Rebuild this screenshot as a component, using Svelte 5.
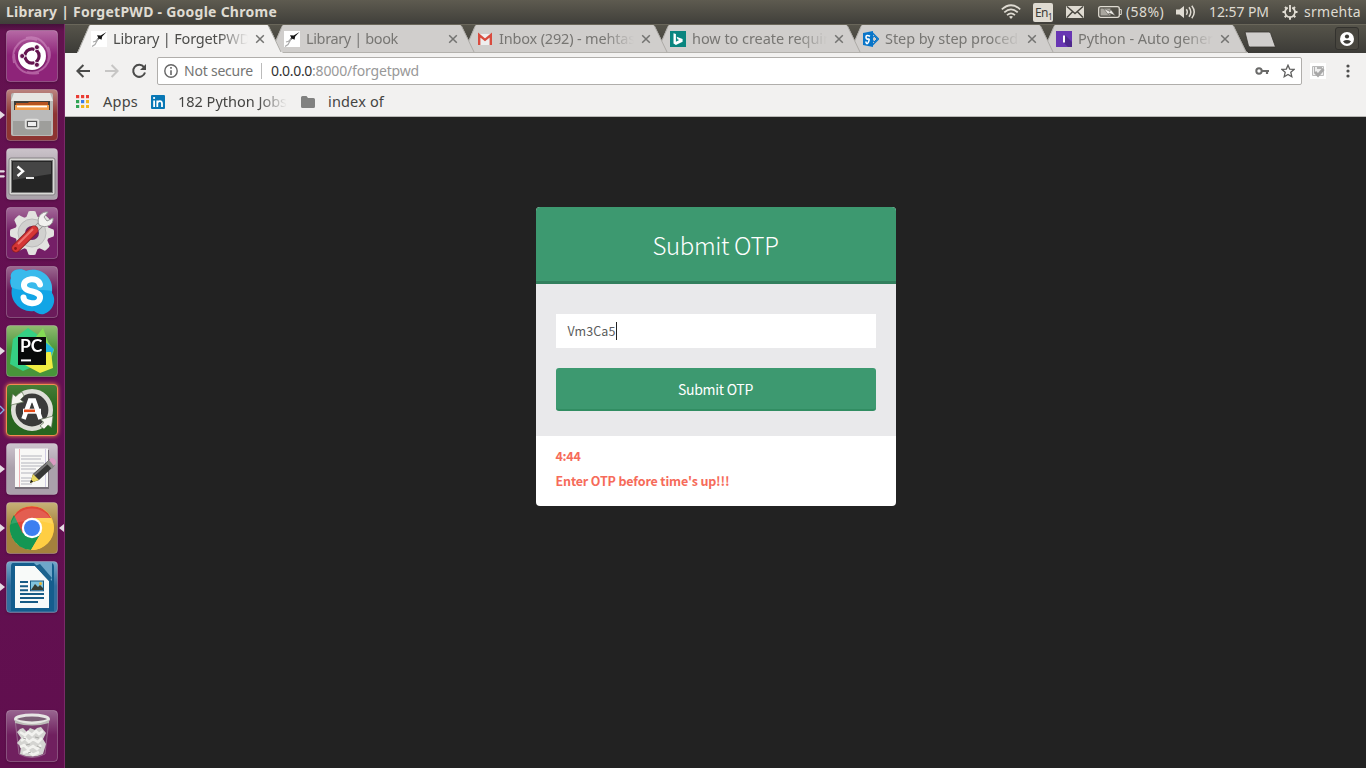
<script>
  const tabs = [
    { icon: 'bird', title: 'Library | ForgetPWD', width: 137, active: true },
    { icon: 'bird', title: 'Library | book', width: 92 },
    { icon: 'gmail', title: 'Inbox (292) - mehtas', width: 136 },
    { icon: 'bing', title: 'how to create requir', width: 137 },
    { icon: 'share', title: 'Step by step procedu', width: 142 },
    { icon: 'python', title: 'Python - Auto genera', width: 143 }
  ];

  const apps = [
    { name: 'dash', top: '#b66aa5', base: '#8e2479' },
    { name: 'files', top: '#bb8580', base: '#8d3432', mark: 'run' },
    { name: 'terminal', top: '#ccc4cb', base: '#aaa3aa', mark: 'two' },
    { name: 'settings', top: '#a36a99', base: '#751f67' },
    { name: 'skype', top: '#9c6a91', base: '#6b1b5b' },
    { name: 'pycharm', top: '#91bb70', base: '#48943a', mark: 'run' },
    { name: 'updater', top: '#477d37', base: '#28651f', mark: 'outline', glow: true },
    { name: 'editor', top: '#cec4ce', base: '#aaa0ab', mark: 'run' },
    { name: 'chrome', top: '#c7b278', base: '#a4813d', mark: 'run', focused: true },
    { name: 'writer', top: '#75a8ca', base: '#316d9d', mark: 'run' },
    { name: 'trash', top: '#986590', base: '#70205f' }
  ];

  let otp = 'Vm3Ca5';

  // Spreads a label's letters so that it fills the given width.
  function fit(node, width) {
    const natural = node.getBoundingClientRect().width;
    node.style.letterSpacing = (width - natural) / node.textContent.length + 'px';
  }
</script>

<div class="desktop">
  <header class="panel">
    <b class="title"><span use:fit={271}>Library | ForgetPWD - Google Chrome</span></b>
    <div class="indicators">
      <svg class="wifi" width="20" height="16" viewBox="0 0 20 16" fill="none" stroke="#dfdbd2" stroke-width="1.7">
        <path d="M.8 5.3Q10-2.8 19.2 5.3M3.3 8.4Q10 2.4 16.7 8.4M6 11.2Q10 7.6 14 11.2" />
        <path d="M8 12.8Q10 11.2 12 12.8L10 15Z" fill="#dfdbd2" stroke="none" />
      </svg>
      <span class="lang">En<sub>1</sub></span>
      <svg class="mail" width="18" height="14" viewBox="0 0 18 14">
        <rect y="1" width="18" height="12" rx="1" fill="#dfdbd2" />
        <path d="M1 1.5L9 8.5L17 1.5M1 12.5L6.3 7M17 12.5L11.7 7" fill="none" stroke="#48463f" stroke-width="1.4" />
      </svg>
      <svg class="battery" width="24" height="14" viewBox="0 0 24 14">
        <rect x=".7" y="1.7" width="20.6" height="10.6" rx="2" fill="none" stroke="#dfdbd2" stroke-width="1.3" />
        <path d="M21.5 4.5h1.8v5h-1.8" fill="none" stroke="#dfdbd2" />
        <rect x="2.5" y="3.5" width="10" height="7" fill="#aaa79f" />
        <path d="M5.5 3.3L12 6.5L12.5 4L17.5 10.8L11 8L10.5 10Z" fill="#eceae5" stroke="#55534b" stroke-width=".6" />
      </svg>
      <span class="percent"><span use:fit={38}>(58%)</span></span>
      <svg class="volume" width="20" height="16" viewBox="0 0 20 16">
        <path d="M0 5.5h3.5L8 2v12l-4.5-3.5H0z" fill="#dfdbd2" />
        <path d="M10.3 5.2q2 2.8 0 5.6M13 3.3q3.6 4.7 0 9.4M15.8 1.7q4.9 6.3 0 12.6" fill="none" stroke="#dfdbd2" stroke-width="1.5" />
      </svg>
      <span class="clock"><span use:fit={60}>12:57 PM</span></span>
      <svg class="gear" width="16" height="16" viewBox="0 0 16 16" fill="none" stroke="#dfdbd2">
        <path d="M5.7 3.6A5 5 0 1 0 10.3 3.6" stroke-width="1.8" />
        <path d="M8 1v7" stroke-width="1.9" />
        <path d="M3 3l2 2M13 3l-2 2M.5 8h3M12.5 8h3M2.7 13.3l2-2M13.3 13.3l-2-2M8 12.8v3" stroke-width="2" />
      </svg>
      <span class="user"><span use:fit={57}>srmehta</span></span>
    </div>
  </header>

  <div class="workspace">
    <nav class="launcher">
      {#each apps as app}
        <div class="slot {app.name}">
          <svg class="tile" class:glow={app.glow} width="52" height="52" viewBox="0 0 52 52">
            <defs>
              <linearGradient id="g-{app.name}" x1="0" y1="0" x2="0" y2="1">
                <stop offset="0" stop-color={app.top} />
                <stop offset=".48" stop-color={app.base} />
                <stop offset="1" stop-color={app.base} />
              </linearGradient>
            </defs>
            <rect x=".5" y=".5" width="51" height="51" rx="3.5" fill="url(#g-{app.name})" stroke={app.glow ? '#f48a51' : '#fff'} stroke-opacity={app.glow ? 1 : 0.25} />
            {#if app.name === 'dash'}
              <path d="M8 33C4 18 16 5 31 10M20 8C34 4 46 18 42 32M42 17C49 31 35 46 21 42M33 43C17 46 8 37 8 24" fill="none" stroke="#d79aca" stroke-opacity=".5" stroke-width="2" />
              <circle cx="26" cy="26.8" r="14.5" fill="#52124a" opacity=".35" />
              <circle cx="26" cy="26" r="14" fill="#fff" />
              <circle cx="26" cy="26" r="7.1" fill="none" stroke="#64144f" stroke-width="3.2" />
              <path d="M16 26h5M30 18l-2 4M30 34l-2-4" stroke="#fff" stroke-width="1.2" />
              <g fill="#64144f" stroke="#fff" stroke-width=".8">
                <circle cx="16.2" cy="26" r="2.5" /><circle cx="30.9" cy="17.2" r="2.5" /><circle cx="30.9" cy="34.8" r="2.5" />
              </g>
            {:else if app.name === 'files'}
              <rect x="5" y="4" width="42" height="43" rx="2" fill="#b9b9b6" />
              <path d="M8 4h36l3 8H5z" fill="#e6e6e3" />
              <rect x="8" y="12" width="36" height="12" fill="#403e39" />
              <path d="M10 14h12l1-1h19v10H10z" fill="#b75420" />
              <path d="M9 16h34v6H9z" fill="#f3a150" />
              <path d="M11 17.5h30" stroke="#fff" stroke-width="1.7" />
              <rect x="7" y="21" width="38" height="25" rx="1" fill="#9e9e9b" />
              <rect x="7" y="21" width="38" height="11" fill="#bababa" />
              <rect x="19.5" y="30.5" width="13" height="9" rx="2" fill="#bcbcb9" stroke="#e0e0de" stroke-width="1.5" />
              <rect x="21.5" y="32.5" width="9" height="5" fill="#eee" stroke="#555" />
            {:else if app.name === 'terminal'}
              <rect x="3" y="10" width="46" height="37" rx="2" fill="#d8d8d5" stroke="#858184" />
              <rect x="5.5" y="12.5" width="41" height="32" fill="#252525" stroke="#777" />
              <path d="M7 14h38v12L7 32z" fill="#454545" />
              <path d="M11.5 18.5L17 23.2L11.5 28" fill="none" stroke="#fff" stroke-width="2.4" />
              <path d="M20 30h8" stroke="#fff" stroke-width="1.8" />
            {:else if app.name === 'settings'}
              <g transform="translate(26 26)">
                <g fill="#e2e2df">
                  {#each [0, 45, 90, 135] as angle}
                    <path d="M-4-20Q-4-22-2-22H2Q4-22 4-20L6-15V15L4 20Q4 22 2 22H-2Q-4 22-4 20L-6 15V-15Z" transform="rotate({angle})" />
                  {/each}
                  <circle r="17" />
                </g>
                <circle r="14" fill="#d1d1cf" stroke="#bbb" /><circle r="7" fill="#742065" />
              </g>
              <path d="M27 25L37 15" stroke="#8a8a88" stroke-width="6.4" />
              <path d="M26 26L37 15" stroke="#d6d6d4" stroke-width="5" />
              <path d="M33 18C30 11 35 4 42 5L38 10L41 14L47 11C48 18 40 22 33 18Z" fill="#f2f2f0" stroke="#999" />
              <path d="M10 41L28 23" stroke="#8d2024" stroke-width="9" stroke-linecap="round" />
              <path d="M10 41L28 23" stroke="#d53534" stroke-width="7.4" stroke-linecap="round" />
              <path d="M12 37L27 22" stroke="#ef7570" stroke-width="2" />
              <circle cx="9.5" cy="41.5" r="1.4" fill="#8b1517" />
            {:else if app.name === 'skype'}
              <path d="M5 12C3 4 14 1 20 5C35 0 48 12 46 27C51 34 47 45 38 48C34 49 31 47 28 45C15 47 3 35 6 22C4 18 3 15 5 12Z" fill="#12a5e6" />
              <path d="M5 12C3 4 14 1 20 5C35 0 48 12 46 25C32 22 14 27 5 21Z" fill="#4fc5ef" opacity=".65" />
              <path d="M34 18.5C32 10.5 17 12 18 20C19 27 35 24 34 32C33 40 18 38 17.5 31.5" fill="none" stroke="#fff" stroke-width="6" stroke-linecap="round" />
            {:else if app.name === 'pycharm'}
              <path d="M4 39L7 14L22 3L35 12L42 35L17 46Z" fill="#35d184" />
              <path d="M29 13L37 3L42 17L48 25L42 44Z" fill="#84dc55" />
              <path d="M38 16L48 24L42 39Z" fill="#25b5dc" />
              <path d="M41 27L45 27L47 43L34 48L19 40Z" fill="#f0ed42" />
              <rect x="12" y="12" width="28" height="28" fill="#080a0a" />
              <text x="14" y="27.2" textLength="22.5" lengthAdjust="spacingAndGlyphs">PC</text>
              <path d="M15 35.4h10" stroke="#fff" stroke-width="2" />
            {:else if app.name === 'updater'}
              <circle cx="26" cy="26" r="19" fill="#3b3b3a" />
              <circle cx="26" cy="26" r="18.7" fill="none" stroke="#deded8" stroke-width="4.6" />
              <path d="M5 21L6.5 10L10 12.5Q12 9.5 16 8L18 12L14.5 15.5L17.5 18Z M34.5 35.5L47 32L45.5 43.5L42 41L38 45L34 42L38 38.5Z" fill="#f5f5ef" stroke="#5d7452" stroke-width=".7" />
              <path d="M17.5 35L24 16.5H28L34.5 35" fill="none" stroke="#fff" stroke-width="4.6" />
              <path d="M17 27.2h18" stroke="#fff" stroke-width="5" />
              <path d="M18 26.8h11" stroke="#e64b19" stroke-width="2.6" />
            {:else if app.name === 'editor'}
              <path d="M9 7H43V46H9z" fill="#777079" />
              <path d="M9 5.5H42V44H9z" fill="#f8f8f6" />
              <path d="M15 13h21M15 16h20M15 20h23M15 23h21M15 26h15M15 30h17M15 35h10M15 38h14M15 41h11" stroke="#b3b4bc" stroke-width="1" />
              <path d="M13.5 6v38" stroke="#efb1b4" /><path d="M39.5 6v38" stroke="#d1cde4" />
              <path d="M24 40L27 31L44 16L49 22L33 37Z" fill="#363735" />
              <path d="M28 32L45 17" stroke="#777" stroke-width="2" />
              <path d="M40 20L43 17L49 22L46 26Z" fill="#8a8a87" />
              <path d="M43 17L45 15Q50 15 50 20L48 23Z" fill="#d99bc2" />
              <path d="M24 40L27 31L33 37Z" fill="#e8d65e" /><path d="M24 40l1.1-3.2 2.1 2z" fill="#151515" />
            {:else if app.name === 'chrome'}
              <circle cx="26" cy="26" r="22" fill="#ffce43" />
              <path d="M26 26L16.2 31.5L6.7 15.4A22 22 0 0 1 45.2 16H26Z" fill="#df4738" />
              <path d="M8 13A22 22 0 0 0 25 48L35 31L26 26L16.5 31Z" fill="#149653" />
              <path d="M26 16H45.2A22 22 0 0 1 25 48L35 31Z" fill="#ffce43" />
              <circle cx="26" cy="26" r="10.2" fill="#fff" /><circle cx="26" cy="26" r="8" fill="#3c7ff0" />
              <path d="M5 22A22 22 0 0 1 47 22Q26 15 5 22" fill="#fff" opacity=".13" />
            {:else if app.name === 'writer'}
              <path d="M7 2h38q3 0 3 4v44H5V6q0-4 2-4z" fill="#145d8d" />
              <path d="M28 2H46V20Z" fill="#6fa7ca" />
              <path d="M9 5H29L43 20V47H9Z" fill="#f8faf9" />
              <path d="M29 5L43 20L46 17L34 3Z" fill="#1d638e" />
              <path d="M14 21h8M14 25.2h8M14 29.3h8M14 33h24M14 37h24M14 41h18" stroke="#175b85" stroke-width="2" />
              <rect x="24.5" y="20" width="13" height="9.8" fill="#80c4df" stroke="#175b85" />
              <path d="M25 29L29 23L32 26L34 24L37 27V29Z" fill="#363e35" /><circle cx="34.5" cy="22.5" r="1.5" fill="#eab736" />
            {:else}
              <path d="M9 9L13 44Q26 51 39 44L43 9" fill="#75456d" fill-opacity=".45" stroke="#ad8ba7" stroke-opacity=".6" />
              <path d="M11 22L14 19L17 18L21 22L24 18L29 20L31 18L35 17L40 23L37 29L40 34L37 44Q26 49 14 44L15 37L11 33L15 28Z" fill="#d4d4d1" />
              <path d="M14 22L19 25L22 22L26 25L30 21L33 24L37 21M15 31L19 28L23 32L27 29L32 32L36 28M14 37L18 35L22 39L27 36L31 39L35 35M17 43L22 41L27 45L33 42" fill="none" stroke="#f2f2ef" stroke-width="2.6" />
              <path d="M17 28L20 29M29 27L33 28M20 35L24 34M31 36L35 38M22 43L25 42" stroke="#a8a8a5" stroke-width="1" />
              <ellipse cx="26" cy="9" rx="16.5" ry="4" fill="#7c6176" stroke="#e7e7e4" stroke-width="3" />
              <path d="M9 10Q26 18 43 10V13Q26 18 9 13Z" fill="#bcbcb8" />
            {/if}
          </svg>
          {#if app.mark}
            <svg class="mark" width="6" height="10" viewBox="0 0 6 10">
              {#if app.mark === 'two'}
                <path d="M0 1.2h4l1 1-1 1.2H0zM0 6.2h4l1 1-1 1.2H0z" fill="#e5dce3" />
              {:else if app.mark === 'outline'}
                <path d="M0 1L4 5L0 9" fill="none" stroke="#83aee4" stroke-width="1.3" />
              {:else}
                <path d="M0 1L5 5L0 9Z" fill="#e5dce3" />
              {/if}
            </svg>
          {/if}
          {#if app.focused}
            <svg class="focus" width="6" height="10" viewBox="0 0 6 10"><path d="M6 1L1 5L6 9Z" fill="#e5dce3" /></svg>
          {/if}
        </div>
      {/each}
    </nav>

    <main class="browser">
      <div class="tabstrip">
        {#each tabs as tab, i}
          <div class="tab" class:active={tab.active} style:z-index={10 - i}>
            <svg class="shape" width="206" height="29" viewBox="0 0 206 29">
              <path d="M0 29L1 27L12 2Q12.5 1 13.5 1H190Q191 1 191.6 2L204 27L206 29Z" fill={tab.active ? '#f2f1f0' : '#d0cecc'} />
              <path d="M1 28L12 2.5M191.5 2L204 28" fill="none" stroke={tab.active ? '#aaa9a4' : '#adaba7'} />
              {#if !tab.active}<path d="M0 28.5H206" stroke="#b3b1ad" />{/if}
            </svg>
            <svg class="favicon" width="16" height="16" viewBox="0 0 16 16">
              {#if tab.icon === 'bird'}
                <path d="M0 0h16v16H0z" fill="#fff" />
                <path d="M15.5 1L11.2 5.4L10.5 8.8L8.6 7.7L4.6 10.5L7.2 6.5L6 4.2L9.7 4.6Z" fill="#161616" />
                <path d="M7.6 7.8L4.5 10.2L2 11M6.5 9L4 13.5L1 15.5" fill="none" stroke="#aaa" stroke-width="1.2" />
              {:else if tab.icon === 'gmail'}
                <path d="M1 3h14v11H1z" fill="#eee" /><path d="M2.2 14V4L8 8.8L13.8 4V14" fill="none" stroke="#d94b3e" stroke-width="2.4" />
              {:else if tab.icon === 'bing'}
                <path d="M0 0h16v16H0z" fill="#0a857f" /><path d="M3.5 2.2l2.4 .9v7.6L9.2 9 7.5 8.2 6.6 5.8l6 2.3v2.6L5.9 14 3.5 12.5z" fill="#fff" />
              {:else if tab.icon === 'share'}
                <path d="M9.5 2L15.5 8L9.5 14" fill="none" stroke="#0875c9" stroke-width="1.5" />
                <path d="M11 5L14 8L11 11L9 8z" fill="none" stroke="#0875c9" />
                <path d="M0 2L10 0V16L0 14z" fill="#0875c9" /><path d="M7 5.2Q3 3.5 3 6T5 8T5.5 11T2.7 10.5" fill="none" stroke="#fff" stroke-width="1.6" />
              {:else}
                <path d="M0 0h16v16H0z" fill="#6836b3" /><path d="M9 4L16 11V16H12L7 11z" fill="#4f298d" /><path d="M8 4.5v7" stroke="#fff" stroke-width="2" />
              {/if}
            </svg>
            <span class="label"><span use:fit={tab.width}>{tab.title}</span></span>
            <svg class="close" width="10" height="10" viewBox="0 0 10 10"><path d="M1.2 1.2l7.6 7.6M8.8 1.2L1.2 8.8" stroke="#737371" stroke-width="1.5" /></svg>
          </div>
        {/each}
        <svg class="newtab" width="34" height="17" viewBox="0 0 34 17"><path d="M2 1H25.5Q27 1 27.6 2.2L32.5 16H7.5Q6 16 5.5 15Z" fill="#d0cecc" stroke="#36342f" stroke-width=".8" /></svg>
        <div class="person">
          <svg width="14" height="14" viewBox="0 0 14 14"><circle cx="7" cy="7" r="7" fill="#fff" /><circle cx="7" cy="4.5" r="2.1" fill="#3c3b37" /><path d="M3 9.2Q7 6.6 11 9.2Q9.5 11.7 7 11.7T3 9.2z" fill="#3c3b37" /></svg>
        </div>
      </div>

      <div class="toolbar">
        <svg class="back" width="15" height="14" viewBox="0 0 15 14" fill="none" stroke="#4b4b4a" stroke-width="2"><path d="M7.4 1L1.4 7L7.4 13M1.7 7H14" /></svg>
        <svg class="forward" width="15" height="14" viewBox="0 0 15 14" fill="none" stroke="#c7c6c5" stroke-width="2"><path d="M7.6 1L13.6 7L7.6 13M13.3 7H1" /></svg>
        <svg class="reload" width="16" height="16" viewBox="0 0 16 16"><path d="M13 4.2A6 6 0 1 0 14 9.5" fill="none" stroke="#4b4b4a" stroke-width="2" /><path d="M15 1V7H9z" fill="#4b4b4a" /></svg>
        <div class="address">
          <svg class="info" width="14" height="14" viewBox="0 0 14 14"><circle cx="7" cy="7" r="6.2" fill="none" stroke="#666" stroke-width="1.4" /><path d="M7 3v1.7M7 6.2V11" stroke="#666" stroke-width="1.6" /></svg>
          <span class="insecure"><span use:fit={69}>Not secure</span></span>
          <span class="url"><span use:fit={41}>0.0.0.0</span><span class="path" use:fit={107}>:8000/forgetpwd</span></span>
          <svg class="key" width="15" height="8" viewBox="0 0 15 8"><circle cx="4" cy="4" r="2.7" fill="none" stroke="#6a6a69" stroke-width="2" /><path d="M7 4h7M12 4v3" stroke="#6a6a69" stroke-width="2.2" /></svg>
          <svg class="star" width="14" height="14" viewBox="0 0 14 14"><path d="M7 1.2L8.7 5.1L13.1 5.4L9.8 8.3L10.8 12.7L7 10.4L3.2 12.7L4.2 8.3L.9 5.4L5.3 5.1Z" fill="none" stroke="#5e5e5d" stroke-width="1.3" /></svg>
        </div>
        <svg class="extension" width="16" height="16" viewBox="0 0 16 16"><path d="M0 0h16v16H0z" fill="#fff" /><path d="M2.5 3.5h11v9h-11z" fill="#eee" stroke="#bbb" /><path d="M4 5h1M7 5h5M4 7h1M4 9h1" stroke="#777" /><path d="M5 9L8 12.2L13.5 6" fill="none" stroke="#a7a7a7" stroke-width="3" /></svg>
        <svg class="more" width="4" height="14" viewBox="0 0 4 14" fill="#4e4e4d"><circle cx="2" cy="2" r="1.6" /><circle cx="2" cy="7" r="1.6" /><circle cx="2" cy="12" r="1.6" /></svg>
      </div>

      <div class="bookmarks">
        <svg class="grid" width="13" height="13" viewBox="0 0 13 13">
          {#each ['#ea3c34', '#ea3c34', '#ea3c34', '#31a354', '#397ce8', '#f1b51c', '#31a354', '#f1b51c', '#f1b51c'] as color, i}
            <rect x={(i % 3) * 5} y={Math.floor(i / 3) * 5} width="3.2" height="3.2" fill={color} />
          {/each}
        </svg>
        <span class="bm-apps"><span use:fit={35}>Apps</span></span>
        <svg class="linkedin" width="14" height="14" viewBox="0 0 14 14"><rect width="14" height="14" rx="1" fill="#0877b5" /><path d="M3.1 5.5V12M6.3 12V5.5M6.4 8Q7 6.2 8.9 6.2T11 8.3V12" fill="none" stroke="#fff" stroke-width="1.8" /><circle cx="3.1" cy="3" r="1.1" fill="#fff" /></svg>
        <span class="bm-jobs"><span use:fit={109}>182 Python Jobs</span></span>
        <svg class="folder" width="14" height="12" viewBox="0 0 14 12"><path d="M0 1.5Q0 0 1.5 0H5.5L7 2H12.5Q14 2 14 3.5V10.5Q14 12 12.5 12H1.5Q0 12 0 10.5Z" fill="#818180" /></svg>
        <span class="bm-index"><span use:fit={56}>index of</span></span>
      </div>

      <div class="page">
        <section class="card">
          <h1><span use:fit={126}>Submit OTP</span></h1>
          <form onsubmit={(e) => e.preventDefault()}>
            <div class="field"><span use:fit={48}>{otp}</span><i class="caret"></i></div>
            <button><span use:fit={75}>Submit OTP</span></button>
          </form>
          <footer>
            <p><span use:fit={25}>4:44</span></p>
            <p><span use:fit={174}>Enter OTP before time's up!!!</span></p>
          </footer>
        </section>
      </div>
    </main>
  </div>
</div>

<style>
  :global(body) { background: #222; overflow: hidden; }
  .desktop { width: 1366px; height: 768px; display: flex; flex-direction: column; font: 14.5px "Noto Sans", sans-serif; overflow: hidden; }
  svg { display: block; flex: none; }
  span { white-space: nowrap; }
  .panel { height: 24px; flex: none; display: flex; align-items: center; justify-content: space-between; color: #dfdbd2; background: linear-gradient(#5e5b50, #403f3a); }
  .title { padding-left: 6px; font-size: 14px; line-height: 24px; font-weight: 700; }
  .indicators { display: flex; align-items: center; width: 366px; height: 24px; font-size: 14px; line-height: 24px; }
  .wifi { margin-left: 1px; }
  .lang { margin-left: 12px; width: 20px; height: 19px; box-sizing: border-box; padding-left: 2px; background: #dfdbd2; color: #3e3d38; border-radius: 2px; font-size: 12px; line-height: 19px; letter-spacing: -.6px; }
  .lang sub { font-size: 8px; line-height: 0; }
  .mail { margin-left: 13px; }
  .battery { margin-left: 14px; }
  .percent { margin-left: 4px; width: 38px; }
  .volume { margin-left: 12px; }
  .clock { margin-left: 13px; width: 60px; }
  .gear { margin-left: 13px; }
  .user { margin-left: 6px; }

  .workspace { flex: 1; display: flex; min-height: 0; }
  .launcher { width: 65px; box-sizing: border-box; flex: none; display: flex; flex-direction: column; gap: 7px; padding: 6px 0 6px 6px; border-right: 1px solid #7a2b68; background: linear-gradient(#46103b, #63124f 7px, #651053 50%, #600f4e); }
  .slot { position: relative; height: 52px; }
  .trash { margin-top: auto; }
  .tile { filter: drop-shadow(0 1px 1px #35072b88); }
  .tile.glow { filter: drop-shadow(0 0 2px #ff884c); }
  .tile text { font: 700 16.5px Lato, sans-serif; fill: #fff; }
  .mark { position: absolute; left: -6px; top: 21px; }
  .focus { position: absolute; right: 0; top: 21px; }

  .browser { flex: 1; min-width: 0; display: flex; flex-direction: column; }
  .tabstrip { height: 29px; flex: none; display: flex; align-items: center; padding-left: 12px; background: linear-gradient(#57554b, #3c3b37); box-shadow: inset 0 1px #69665a; }
  .tab { position: relative; width: 191px; height: 29px; flex: none; display: flex; align-items: center; padding-left: 14px; margin-right: -12px; color: #777673; }
  .tab.active { color: #4d4d4b; }
  .shape { position: absolute; inset: 0 auto auto 0; }
  .favicon, .close { position: relative; }
  .label { position: relative; width: 135px; margin-left: 6px; overflow: hidden; line-height: 26px; padding-bottom: 2px; -webkit-mask-image: linear-gradient(90deg, #000 105px, transparent 135px); mask-image: linear-gradient(90deg, #000 105px, transparent 135px); }
  .close { margin-left: 7px; }
  .newtab { margin: 2px 0 0 8px; }
  .person { box-sizing: border-box; width: 24px; height: 23px; margin-left: auto; margin-right: 7px; display: grid; place-items: center; border: 1px solid #33322e; border-radius: 3px; background: #48463f; }

  .toolbar { height: 36px; flex: none; display: flex; align-items: center; background: #f2f1f0; }
  .back { margin-left: 11px; }
  .forward { margin-left: 13px; }
  .reload { margin-left: 12px; }
  .address { width: 1145px; height: 28px; box-sizing: border-box; margin-left: 10px; border: 1px solid #b0aeab; border-radius: 2px; background: #fff; display: flex; align-items: center; padding-left: 6px; font-size: 14px; line-height: 26px; }
  .insecure { margin-left: 6px; width: 77px; color: #757574; border-right: 1px solid #bbb; line-height: 16px; }
  .url { margin-left: 9px; color: #333; }
  .path { color: #999; }
  .key { margin-left: auto; }
  .star { margin: 0 6px 0 11px; }
  .extension { margin-left: 8px; }
  .more { margin-left: 20px; }
  .bookmarks { height: 27px; flex: none; display: flex; align-items: center; color: #444442; background: #f2f1f0; border-bottom: 1px solid #b9b8b5; line-height: 23px; }
  .bookmarks svg { margin-bottom: 2px; }
  .bookmarks > span { padding-bottom: 3px; }
  .grid { margin-left: 11px; }
  .bm-apps { margin-left: 14px; width: 36px; }
  .linkedin { margin-left: 12px; }
  .bm-jobs { margin-left: 13px; width: 109px; overflow: hidden; -webkit-mask-image: linear-gradient(90deg, #000 80px, transparent); mask-image: linear-gradient(90deg, #000 80px, transparent); }
  .folder { margin-left: 14px; }
  .bm-index { margin-left: 13px; }

  .page { flex: 1; background: #222; display: flex; justify-content: center; align-items: flex-start; padding-top: 90px; font-family: "Noto Sans CJK SC", "Open Sans", sans-serif; }
  .card { width: 360px; border-radius: 4px; overflow: hidden; background: #fff; }
  h1 { box-sizing: border-box; margin: 0; height: 77px; border-bottom: 3px solid #327f5d; background: #3d9970; color: #fff; text-align: center; font-size: 24px; font-weight: 300; line-height: 76px; }
  form { height: 152px; box-sizing: border-box; padding: 30px 20px 0; background: #e9e9eb; }
  .field { height: 34px; box-sizing: border-box; padding: 0 0 1px 12px; display: flex; align-items: center; background: #fff; font-size: 12.5px; color: #5b5b5b; }
  .caret { width: 1px; height: 18px; background: #222; }
  button { width: 320px; height: 43px; margin: 20px 0 0; padding: 0; border: 0; border-bottom: 2px solid #318d62; border-radius: 3px; color: #fff; background: #3d9970; display: block; font: 14px "Noto Sans CJK SC", "Open Sans", sans-serif; }
  footer { height: 70px; box-sizing: border-box; padding: 7px 20px 0; color: #f66b5a; font-size: 12.5px; font-weight: 600; line-height: 25px; }
  p { margin: 0; }
</style>
